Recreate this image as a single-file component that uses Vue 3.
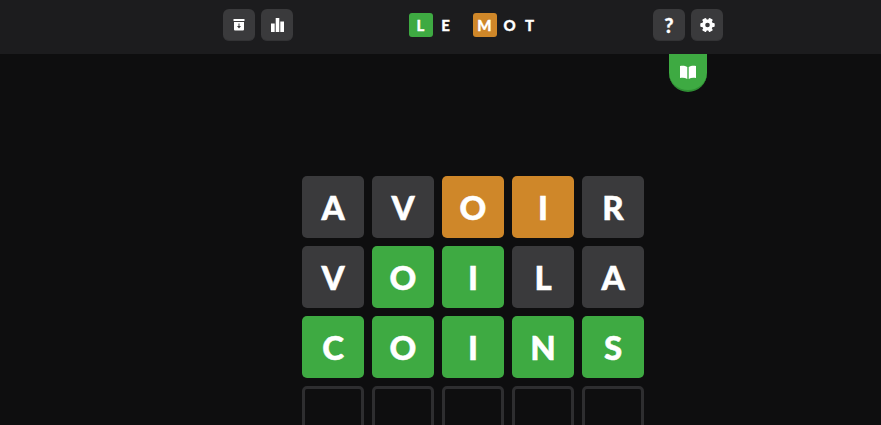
<script setup>
const rows = [
  [['A', 'absent'], ['V', 'absent'], ['O', 'present'], ['I', 'present'], ['R', 'absent']],
  [['V', 'absent'], ['O', 'correct'], ['I', 'correct'], ['L', 'absent'], ['A', 'absent']],
  [['C', 'correct'], ['O', 'correct'], ['I', 'correct'], ['N', 'correct'], ['S', 'correct']],
  [['', 'empty'], ['', 'empty'], ['', 'empty'], ['', 'empty'], ['', 'empty']],
]
const teeth = [30, 90, 150, 210, 270, 330]
</script>

<template>
  <div class="page">
    <header class="topbar">
      <div class="topbar-inner">
        <div class="btns">
          <button class="btn" aria-label="Archives">
            <svg width="12" height="12" viewBox="0 0 12 12"><path fill="#fff" d="M.5 0h11v2H.5z"/><path fill="#fff" fill-rule="evenodd" d="M1 3h10v7.600c0 .5-.4.9-.9.9H1.900c-.5 0-.9-.4-.9-.9zM5.500 4.600v2.500H4L6 9.400l2-2.300H6.500V4.600z"/></svg>
          </button>
          <button class="btn" aria-label="Statistiques">
            <svg width="13" height="14" viewBox="0 0 13 14"><path fill="#fff" d="M0 5.500h3.700V14H0zM4.700 0h3.600v14H4.700zM9.300 3.500H13V14H9.300z"/></svg>
          </button>
        </div>
        <div class="logo">
          <div class="word">
            <span class="logo-tile correct">L</span>
            <span class="logo-letter">E</span>
          </div>
          <div class="word">
            <span class="logo-tile present">M</span>
            <span class="logo-letter">O</span>
            <span class="logo-letter">T</span>
          </div>
        </div>
        <div class="btns">
          <button class="btn help" aria-label="Aide">?</button>
          <button class="btn" aria-label="Réglages">
            <svg width="15" height="14" viewBox="-7.500 -7 15 14">
              <circle r="3.900" fill="none" stroke="#fff" stroke-width="3.200"/>
              <rect v-for="a in teeth" :key="a" x="-2.100" y="-7.200" width="4.200" height="3" rx="1" fill="#fff" :transform="`rotate(${a})`"/>
            </svg>
          </button>
        </div>
        <button class="tab" aria-label="Règles">
          <svg width="16" height="14" viewBox="0 0 16 14"><path fill="#fff" d="M0 1c2.700-.7 5.200-.3 7.300 1.100V14C5.200 12.700 2.700 12.400 0 13zM16 1c-2.700-.7-5.200-.3-7.300 1.100V14c2.100-1.300 4.600-1.600 7.300-1z"/></svg>
        </button>
      </div>
    </header>
    <main class="board">
      <div v-for="(row, i) in rows" :key="i" class="row">
        <div v-for="(cell, j) in row" :key="j" class="tile" :class="cell[1]">{{ cell[0] }}</div>
      </div>
    </main>
  </div>
</template>

<style scoped>
.page { height: 425px; overflow: hidden; background: #0e0e0f; font-family: Lato, "Liberation Sans", sans-serif; color: #fff; }
.topbar { height: 54px; padding-left: 223px; background: #1c1c1e; display: flex; }
.topbar-inner { position: relative; width: 500px; height: 54px; display: flex; align-items: flex-start; justify-content: space-between; }
.btns { display: flex; gap: 6px; padding-top: 9px; }
.btn {
  width: 32px; height: 32px; padding: 0; border: 0; border-bottom: 1px solid #333335; border-radius: 6px;
  background: #3a3a3c; color: #fff; display: grid; place-items: center; cursor: pointer;
}
.help { font-family: Lato, sans-serif; font-weight: 900; font-size: 20px; line-height: 1; -webkit-text-stroke: .3px #fff; }
.logo { display: flex; gap: 19px; padding-top: 13px; font-weight: 900; font-size: 15px; -webkit-text-stroke: .3px #fff; }
.word { display: flex; gap: 4px; }
.logo-tile { width: 24px; height: 24px; margin-right: 1px; border-radius: 3px; display: grid; place-items: center; }
.logo-letter { width: 16px; height: 24px; display: grid; place-items: center; }
.tab {
  position: absolute; top: 54px; right: 16px; width: 38px; height: 38px; padding: 0; border: 0;
  border-bottom: 2px solid #2f8f34; border-radius: 0 0 19px 19px; background: #3eaa42;
  display: grid; place-items: center; cursor: pointer;
}
.board { display: flex; flex-direction: column; gap: 8px; width: 342px; margin: 122px 0 0 302px; }
.row { display: flex; gap: 8px; }
.tile {
  width: 62px; height: 62px; flex: none; box-sizing: border-box; border-radius: 5px;
  display: grid; place-items: center; font-weight: 900; font-size: 33px; line-height: 1; -webkit-text-stroke: .5px #fff;
}
.absent { background: #3a3a3c; }
.present { background: #cf8729; }
.correct { background: #3eaa42; }
.empty { border: 3px solid #2e2e30; }
</style>

<style>
html, body { background: #0e0e0f; overflow: hidden; }
</style>
